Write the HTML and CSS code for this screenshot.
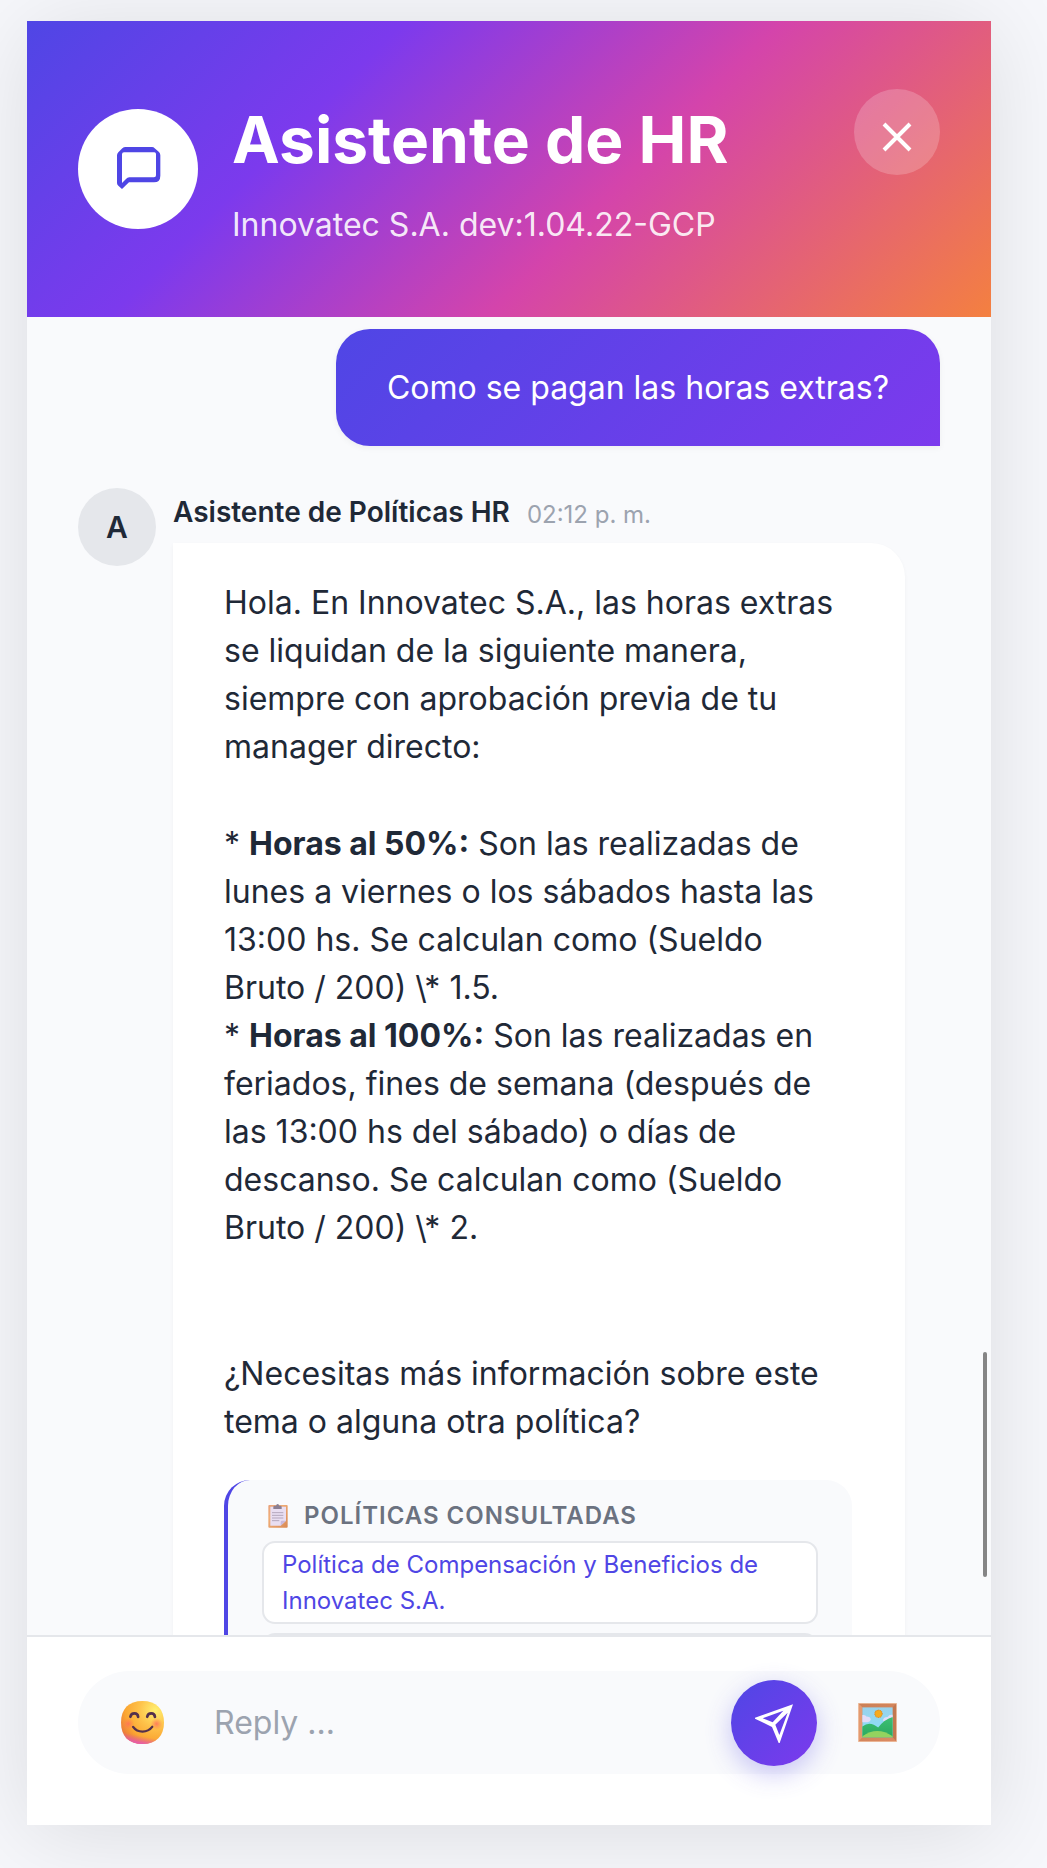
FILE: index.html
```html
<!DOCTYPE html>
<html lang="es">
<head>
<meta charset="utf-8">
<meta name="viewport" content="width=device-width, initial-scale=1">
<title>Asistente de HR</title>
<link rel="stylesheet" href="styles.css">
</head>
<body>
<main class="chat">
  <header class="chat-header">
    <div class="brand-icon">
      <svg viewBox="335 428 156 156" aria-hidden="true">
        <path fill="#4f46e5" fill-rule="evenodd" d="M376 440H455Q460 440 463 444L476 455Q480 459 480 465V526Q480 546 461 546H386L365 566L354 556Q350 553 350 548V465Q350 460 354 456L366 444Q370 440 376 440ZM371 456Q365 456 365 462V548L377 536Q381 531 387 531H461Q467 531 467 525V461Q467 456 462 456Z"/>
      </svg>
    </div>
    <div class="heading">
      <h1 class="title">Asistente de HR</h1>
      <p class="subtitle">Innovatec S.A. dev:1.04.22-GCP</p>
    </div>
    <button class="close" type="button" aria-label="Cerrar">
      <svg viewBox="0 0 86 86" aria-hidden="true"><path d="M30 35l26 26M56 35l-26 26" fill="none" stroke="#fff" stroke-width="4"/></svg>
    </button>
  </header>

  <section class="feed-wrap">
    <div class="feed">
      <p class="bubble-user">Como se pagan las horas extras?</p>
      <article class="reply">
        <div class="avatar">A</div>
        <div class="reply-body">
          <div class="meta">
            <span class="author">Asistente de Políticas HR</span>
            <time class="time">02:12 p. m.</time>
          </div>
          <div class="bubble-bot">
            <p>Hola. En Innovatec S.A., las horas extras se liquidan de la siguiente manera, siempre con aprobación previa de tu manager directo:</p>
            <p>* <strong>Horas al 50%:</strong> Son las realizadas de lunes a viernes o los sábados hasta las 13:00 hs. Se calculan como (Sueldo Bruto / 200) \* 1.5.<br>* <strong>Horas al 100%:</strong> Son las realizadas en feriados, fines de semana (después de las 13:00 hs del sábado) o días de descanso. Se calculan como (Sueldo Bruto / 200) \* 2.</p>
            <p class="closing">¿Necesitas más información sobre este tema o alguna otra política?</p>
            <section class="sources">
              <h2 class="sources-title">
                <svg class="clipboard" viewBox="0 0 60 72" aria-hidden="true">
                  <defs><linearGradient id="board" x1="0" y1="0" x2="1" y2="1"><stop offset="0" stop-color="#e8a07a"/><stop offset=".3" stop-color="#f0ae78"/><stop offset="1" stop-color="#d98a55"/></linearGradient></defs>
                  <rect x="1" y="3" width="58" height="68" rx="3" fill="url(#board)"/>
                  <path d="M7 8H54V50L38 65H7Z" fill="#e9def2"/>
                  <path d="M54 50L38 65V54Q38 50 42 50Z" fill="#c9b9dc"/>
                  <path d="M16 15V8Q16 5 20 5H24Q25 0 29 0T34 5H37Q41 5 41 8V15Z" fill="#8b7f93"/>
                  <path d="M12 26H46M12 34H46M12 42H46M12 50H34" stroke="#b3a6bd" stroke-width="3"/>
                </svg>
                Políticas consultadas
              </h2>
              <a class="source" href="#compensacion">Política de Compensación y Beneficios de Innovatec S.A.</a>
              <a class="source" href="#politica" aria-label="Política"></a>
            </section>
          </div>
        </div>
      </article>
    </div>
    <div class="scroll-thumb"></div>
  </section>

  <footer class="composer">
    <form class="composer-bar">
      <button class="tool" type="button" aria-label="Insertar emoji">
        <svg class="smile" viewBox="0 0 128 128" aria-hidden="true">
          <defs>
            <radialGradient id="face" cx=".8" cy=".22" r="1"><stop offset="0" stop-color="#fff070"/><stop offset=".38" stop-color="#fec24a"/><stop offset=".7" stop-color="#fba632"/><stop offset="1" stop-color="#e3683f"/></radialGradient>
            <linearGradient id="chin" x1=".54" y1=".7" x2=".48" y2="1"><stop offset=".4" stop-color="#e65aa0" stop-opacity="0"/><stop offset="1" stop-color="#e65ab0"/></linearGradient>
            <radialGradient id="cheek"><stop offset="0" stop-color="#ff6b5c" stop-opacity=".8"/><stop offset="1" stop-color="#ff7a55" stop-opacity="0"/></radialGradient>
          </defs>
          <path fill="url(#face)" d="M64 0C105 0 128 24 128 64S105 128 64 128 0 105 0 64 23 0 64 0Z"/>
          <path fill="url(#chin)" d="M64 0C105 0 128 24 128 64S105 128 64 128 0 105 0 64 23 0 64 0Z"/>
          <circle cx="22" cy="68" r="18" fill="url(#cheek)"/><circle cx="106" cy="68" r="18" fill="url(#cheek)"/>
          <path fill="none" stroke="#54304c" stroke-width="8" stroke-linecap="round" d="M28 47Q30 37 40 37T51 47M78 47Q80 37 90 37T101 47"/>
          <path fill="none" stroke="#54304c" stroke-width="7" stroke-linecap="round" d="M36 77Q46 91 64 91T93 77"/>
        </svg>
      </button>
      <input class="message" type="text" placeholder="Reply ..." aria-label="Mensaje">
      <button class="send" type="submit" aria-label="Enviar">
        <svg viewBox="679 231 150 150" aria-hidden="true"><path fill="#fff" fill-rule="evenodd" d="M811 250L697 290V293L748 318L768 366H771ZM720 292L782 269L750 304ZM758 311L795 275L770 342Z"/></svg>
      </button>
      <button class="tool" type="button" aria-label="Adjuntar imagen">
        <svg class="picture" viewBox="0 0 116 116" aria-hidden="true">
          <defs>
            <linearGradient id="frame" x1="0" y1="0" x2="1" y2="1"><stop offset="0" stop-color="#c97f56"/><stop offset="1" stop-color="#dd8a62"/></linearGradient>
            <linearGradient id="sky" x1="0" y1="0" x2="0" y2="1"><stop offset="0" stop-color="#98d2ec"/><stop offset="1" stop-color="#88e0fa"/></linearGradient>
            <linearGradient id="hill" x1="0" y1="0" x2="0" y2="1"><stop offset="0" stop-color="#3cc073"/><stop offset="1" stop-color="#2aa85f"/></linearGradient>
          </defs>
          <path fill="url(#frame)" d="M0 0H116V116H0Z"/>
          <path fill="#e39a70" d="M0 0L13 13V102L0 116Z"/>
          <path fill="#c2774f" d="M116 0L103 13V102L116 116Z"/>
          <path fill="none" stroke="#efc3a6" stroke-width="3" d="M1 1H115V115H1Z"/>
          <path fill="url(#sky)" d="M13 13H103V102H13Z"/>
          <path fill="#e2dcf8" d="M13 36Q22 34 25 40Q38 40 38 50Q36 57 28 57H13ZM103 35Q92 34 88 42Q76 42 74 52L84 58L103 44Z"/>
          <path fill="url(#hill)" d="M13 70Q35 52 60 73Q80 48 103 42V102H13Z"/>
          <path fill="#93d35f" d="M13 102V99Q57 67 103 99V102Z"/>
          <circle cx="61" cy="32" r="11" fill="#f7ab1e" stroke="#d88b2b" stroke-width="3" stroke-dasharray="3 2"/>
        </svg>
      </button>
    </form>
  </footer>
</main>
</body>
</html>
```
FILE: styles.css
```css
* { box-sizing: border-box; }

body {
  margin: 0;
  height: 100vh;
  padding: 21px 56px 43px 27px;
  background: #f6f7fb;
  color: #1f2937;
  font-family: Inter, "Liberation Sans", sans-serif;
  font-size: 32px;
  line-height: 48px;
  overflow: hidden;
}

h1, h2, p { margin: 0; }

button {
  padding: 0;
  border: 0;
  background: none;
  display: grid;
  place-items: center;
  flex: none;
}

svg { display: block; }

.chat {
  height: 100%;
  display: flex;
  flex-direction: column;
  background: #f9fafc;
  box-shadow: 0 8px 86px rgba(0, 0, 0, 0.11);
}

/* Header */
.chat-header {
  display: flex;
  align-items: center;
  gap: 34px;
  padding: 68px 51px;
  background: linear-gradient(135deg, #4f46e5 0%, #7c3aed 30%, #d444ab 60%, #f48040 100%);
  color: #fff;
}

.brand-icon {
  width: 120px;
  height: 120px;
  flex: none;
  display: grid;
  place-items: center;
  border-radius: 50%;
  background: #fff;
}
.brand-icon svg { width: 52px; height: 52px; }

.heading { flex: 1; min-width: 0; }

.title {
  font-size: 64px;
  font-weight: 700;
  line-height: 102px;
}

.subtitle {
  margin-top: 10px;
  color: rgba(255, 255, 255, 0.9);
}

.close {
  width: 86px;
  height: 86px;
  align-self: flex-start;
  border-radius: 50%;
  background: rgba(255, 255, 255, 0.2);
}
.close svg { width: 86px; height: 86px; }

/* Conversation */
.feed-wrap {
  position: relative;
  flex: 1;
  min-height: 0;
}

.feed {
  height: 100%;
  overflow: hidden;
  padding: 12px 51px 0;
  display: flex;
  flex-direction: column;
  gap: 42px;
}

.bubble-user {
  flex: none;
  align-self: flex-end;
  padding: 35px 51px 34px;
  border-radius: 34px 34px 0 34px;
  background: linear-gradient(135deg, #4f46e5, #7c3aed);
  box-shadow: 0 2px 6px rgba(0, 0, 0, 0.05);
  color: #fff;
}

.reply {
  flex: none;
  display: flex;
  align-items: flex-start;
  gap: 17px;
  padding-right: 35px;
}

.avatar {
  width: 78px;
  height: 78px;
  flex: none;
  display: grid;
  place-items: center;
  border-radius: 50%;
  background: #e5e7eb;
  font-size: 30px;
  font-weight: 600;
}

.reply-body { flex: 1; min-width: 0; }

.meta {
  display: flex;
  align-items: flex-start;
  gap: 17px;
  height: 55px;
}
.author { font-size: 28px; font-weight: 600; line-height: 48px; }
.time { font-size: 24px; line-height: 54px; color: #9ca3af; }

.bubble-bot {
  display: flex;
  flex-direction: column;
  gap: 49px;
  padding: 36px 53px 36px 51px;
  border-radius: 0 34px 34px 34px;
  background: #fff;
  box-shadow: 0 2px 4px rgba(0, 0, 0, 0.04);
}
.closing { padding-top: 49px; }

.sources {
  display: flex;
  flex-direction: column;
  gap: 9px;
  margin-top: -15px;
  padding: 20px 34px;
  border-left: 4px solid #4f46e5;
  border-radius: 26px;
  background: #f9fafc;
}

.sources-title {
  display: flex;
  align-items: center;
  gap: 16px;
  padding-left: 6px;
  font-size: 24px;
  font-weight: 600;
  line-height: 32px;
  letter-spacing: 1px;
  text-transform: uppercase;
  color: #6b7280;
}
.clipboard { width: 20px; height: 24px; }

.source {
  display: block;
  min-height: 83px;
  padding: 4px 18px 3px;
  border: 2px solid #e5e7eb;
  border-radius: 13px;
  background: #fff;
  color: #4f46e5;
  font-size: 24px;
  line-height: 36px;
  text-decoration: none;
}

.scroll-thumb {
  position: absolute;
  right: 4px;
  bottom: 58px;
  width: 4px;
  height: 225px;
  border-radius: 2px;
  background: #858585;
}

/* Composer */
.composer {
  padding: 34px 51px 51px;
  border-top: 2px solid #e5e7eb;
  background: #fff;
}

.composer-bar {
  display: flex;
  align-items: center;
  height: 103px;
  padding: 0 43px;
  border-radius: 52px;
  background: #f9fafc;
}

.smile { width: 43px; height: 43px; }
.picture { width: 39px; height: 39px; }

.message {
  flex: 1;
  min-width: 0;
  height: 86px;
  margin: 0;
  padding: 0 50px;
  border: 0;
  outline: 0;
  background: none;
  color: #1f2937;
  font: inherit;
}
.message::placeholder { color: #9ca3af; opacity: 1; }

.send {
  width: 86px;
  height: 86px;
  margin-right: 41px;
  border-radius: 50%;
  background: linear-gradient(135deg, #4f46e5, #7c3aed);
  box-shadow: 0 8px 26px rgba(79, 70, 229, 0.3);
}
.send svg { width: 50px; height: 50px; }
```
